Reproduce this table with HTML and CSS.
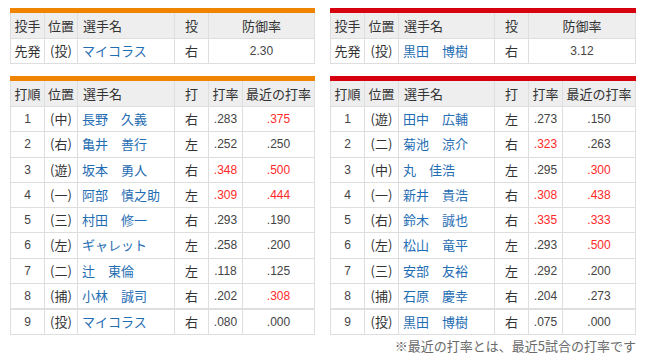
FILE: index.html
```html
<!DOCTYPE html>
<html lang="ja">
<head>
<meta charset="utf-8">
<link rel="stylesheet" href="styles.css">
</head>
<body>
<div class="page">
  <div class="col">
    <table class="tbl pit giants">
      <colgroup><col class="c34"><col class="c33"><col class="c97"><col class="c34"><col></colgroup>
      <tr class="hd"><th>投手</th><th>位置</th><th class="l">選手名</th><th>投</th><th>防御率</th></tr>
      <tr><td>先発</td><td>(投)</td><td class="nm">マイコラス</td><td>右</td><td class="num">2.30</td></tr>
    </table>
    <table class="tbl lu giants">
      <colgroup><col class="c34"><col class="c33"><col class="c97"><col class="c34"><col class="c34"><col></colgroup>
      <tr class="hd"><th>打順</th><th>位置</th><th class="l">選手名</th><th>打</th><th>打率</th><th>最近の打率</th></tr>
      <tr><td class="num">1</td><td>(中)</td><td class="nm">長野　久義</td><td>右</td><td class="num">.283</td><td class="num red">.375</td></tr>
      <tr><td class="num">2</td><td>(右)</td><td class="nm">亀井　善行</td><td>左</td><td class="num">.252</td><td class="num">.250</td></tr>
      <tr><td class="num">3</td><td>(遊)</td><td class="nm">坂本　勇人</td><td>右</td><td class="num red">.348</td><td class="num red">.500</td></tr>
      <tr><td class="num">4</td><td>(一)</td><td class="nm">阿部　慎之助</td><td>左</td><td class="num red">.309</td><td class="num red">.444</td></tr>
      <tr><td class="num">5</td><td>(三)</td><td class="nm">村田　修一</td><td>右</td><td class="num">.293</td><td class="num">.190</td></tr>
      <tr><td class="num">6</td><td>(左)</td><td class="nm">ギャレット</td><td>左</td><td class="num">.258</td><td class="num">.200</td></tr>
      <tr><td class="num">7</td><td>(二)</td><td class="nm">辻　東倫</td><td>左</td><td class="num">.118</td><td class="num">.125</td></tr>
      <tr><td class="num">8</td><td>(捕)</td><td class="nm">小林　誠司</td><td>右</td><td class="num">.202</td><td class="num red">.308</td></tr>
      <tr class="last"><td class="num">9</td><td>(投)</td><td class="nm">マイコラス</td><td>右</td><td class="num">.080</td><td class="num">.000</td></tr>
    </table>
  </div>
  <div class="col">
    <table class="tbl pit carp">
      <colgroup><col class="c34"><col class="c34"><col class="c96"><col class="c34"><col></colgroup>
      <tr class="hd"><th>投手</th><th>位置</th><th class="l">選手名</th><th>投</th><th>防御率</th></tr>
      <tr><td>先発</td><td>(投)</td><td class="nm">黒田　博樹</td><td>右</td><td class="num">3.12</td></tr>
    </table>
    <table class="tbl lu carp">
      <colgroup><col class="c34"><col class="c34"><col class="c96"><col class="c34"><col class="c34"><col></colgroup>
      <tr class="hd"><th>打順</th><th>位置</th><th class="l">選手名</th><th>打</th><th>打率</th><th>最近の打率</th></tr>
      <tr><td class="num">1</td><td>(遊)</td><td class="nm">田中　広輔</td><td>左</td><td class="num">.273</td><td class="num">.150</td></tr>
      <tr><td class="num">2</td><td>(二)</td><td class="nm">菊池　涼介</td><td>右</td><td class="num red">.323</td><td class="num">.263</td></tr>
      <tr><td class="num">3</td><td>(中)</td><td class="nm">丸　佳浩</td><td>左</td><td class="num">.295</td><td class="num red">.300</td></tr>
      <tr><td class="num">4</td><td>(一)</td><td class="nm">新井　貴浩</td><td>右</td><td class="num red">.308</td><td class="num red">.438</td></tr>
      <tr><td class="num">5</td><td>(右)</td><td class="nm">鈴木　誠也</td><td>右</td><td class="num red">.335</td><td class="num red">.333</td></tr>
      <tr><td class="num">6</td><td>(左)</td><td class="nm">松山　竜平</td><td>左</td><td class="num">.293</td><td class="num red">.500</td></tr>
      <tr><td class="num">7</td><td>(三)</td><td class="nm">安部　友裕</td><td>左</td><td class="num">.292</td><td class="num">.200</td></tr>
      <tr><td class="num">8</td><td>(捕)</td><td class="nm">石原　慶幸</td><td>右</td><td class="num">.204</td><td class="num">.273</td></tr>
      <tr class="last"><td class="num">9</td><td>(投)</td><td class="nm">黒田　博樹</td><td>右</td><td class="num">.075</td><td class="num">.000</td></tr>
    </table>
    <p class="note">※最近の打率とは、最近5試合の打率です</p>
  </div>
</div>
</body>
</html>
```

FILE: styles.css
```css
html, body {
  margin: 0;
  padding: 0;
  background: #fff;
}
body {
  font-family: "Noto Sans CJK JP", "Liberation Sans", sans-serif;
  font-size: 13px;
  color: #333;
}
.page {
  display: flex;
  gap: 15px;
  padding: 8px 0 0 10px;
}
.col {
  display: flex;
  flex-direction: column;
  gap: 12px;
}
.col:first-child { width: 305px; }
.col:last-child { width: 306px; }
.tbl {
  width: 100%;
  border-collapse: collapse;
  table-layout: fixed;
}
.giants { border-top: 5px solid #f08300; }
.carp { border-top: 5px solid #d7000f; }
.c33 { width: 33px; }
.c34 { width: 34px; }
.c96 { width: 96px; }
.c97 { width: 97px; }
.tbl th, .tbl td {
  border: 1px solid #dedede;
  text-align: center;
  padding: 0;
  height: 24px;
  line-height: 16px;
  white-space: nowrap;
  overflow: hidden;
  font-weight: normal;
}
.lu td { height: 24.25px; }
.tbl th {
  background: #eeeeee;
  height: 25px;
  color: #333;
}
.tbl .l { text-align: left; padding-left: 5px; }
.tbl .nm { text-align: left; padding-left: 4px; color: #1f6db3; }
.tbl .num {
  font-family: "Liberation Sans", Arial, sans-serif;
  font-size: 12px;
  color: #444;
}
.tbl .num.red { color: #ff2a2a; }
.lu tr.last td { border-top: 2px solid #dedede; }
.note {
  margin: 0;
  text-align: right;
  color: #6a6a6a;
  font-size: 13px;
  line-height: 16px;
  margin-top: -9px;
}
```
